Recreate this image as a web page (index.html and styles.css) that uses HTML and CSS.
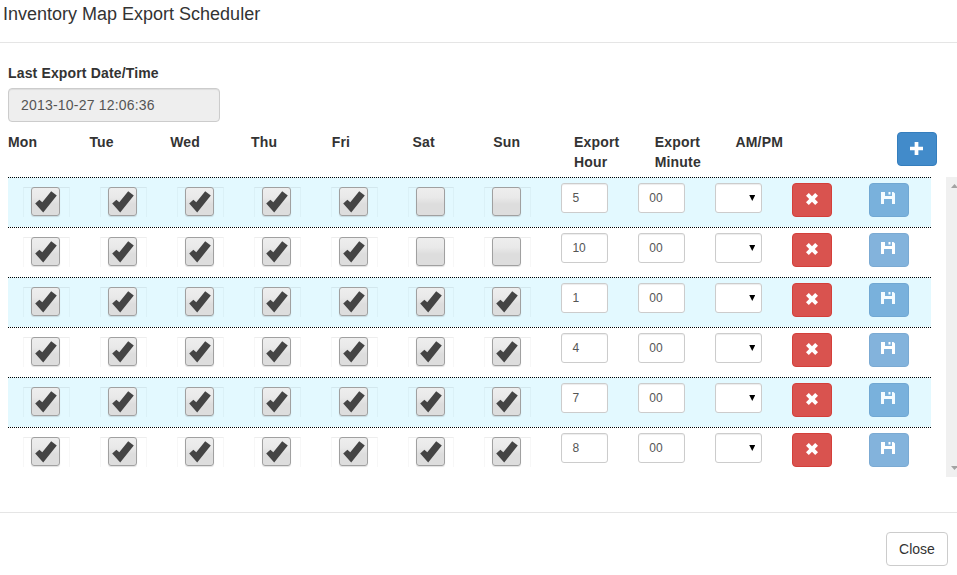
FILE: index.html
```html
<!DOCTYPE html>
<html lang="en">
<head>
<meta charset="utf-8">
<title>Inventory Map Export Scheduler</title>
<link rel="stylesheet" href="styles.css">
</head>
<body>
<svg class="sprites" aria-hidden="true">
  <symbol id="check" viewBox="0 0 22 22"><path d="M.2 12.6 4.4 8.8 7.3 11.2 16.2.2 21.8 4.6 8.2 21.4z"/></symbol>
  <symbol id="plus" viewBox="0 0 14 14"><path d="M5 0h4v5h5v4H9v5H5V9H0V5h5z"/></symbol>
  <symbol id="times" viewBox="0 0 12 12"><path d="M0 2.8 2.8 0 6 3.2 9.2 0 12 2.8 8.8 6 12 9.2 9.2 12 6 8.8 2.8 12 0 9.2 3.2 6z"/></symbol>
  <symbol id="floppy" viewBox="0 0 14 12"><path d="M0 0h4v4h7V0h1.5L14 1.5V12h-3V7H3v5H0zM4 4h7v3H4zM7.5 0h2v2.6h-2z"/></symbol>
</svg>
<header class="title">Inventory Map Export Scheduler</header>
<main class="body">
  <label class="label" for="last">Last Export Date/Time</label>
  <input class="last" id="last" value="2013-10-27 12:06:36" disabled>
  <div class="heads">
    <b>Mon</b><b>Tue</b><b>Wed</b><b>Thu</b><b>Fri</b><b>Sat</b><b>Sun</b>
    <b>Export Hour</b><b>Export Minute</b><b>AM/PM</b><b></b>
    <button class="btn add"><svg><use href="#plus"/></svg></button>
  </div>
  <div class="list">
    <div class="rows" id="rows"></div>
    <div class="scroll"><i class="up"></i><i class="down"></i></div>
  </div>
</main>
<footer class="footer"><button class="close">Close</button></footer>
<script src="rows.js"></script>
</body>
</html>
```
FILE: rows.js
```js
const schedule = [
  { hour: "5", days: 5 },
  { hour: "10", days: 5 },
  { hour: "1", days: 7 },
  { hour: "4", days: 7 },
  { hour: "7", days: 7 },
  { hour: "8", days: 7 }
];

document.getElementById("rows").innerHTML = schedule.map(({ hour, days }) => {
  const boxes = Array.from({ length: 7 }, (_, day) =>
    `<div class="cell"><div class="toggle"><span class="box">${day < days ? '<svg><use href="#check"/></svg>' : ""}</span></div></div>`
  ).join("");
  return `<div class="row">${boxes}
    <div class="cell"><div class="field">${hour}</div></div>
    <div class="cell"><div class="field">00</div></div>
    <div class="cell"><div class="field select"><i></i></div></div>
    <div class="cell"><button class="btn remove"><svg><use href="#times"/></svg></button></div>
    <div class="cell"><button class="btn save"><svg><use href="#floppy"/></svg></button></div>
  </div>`;
}).join("");
```
FILE: styles.css
```css
* { box-sizing: border-box; }
body {
  margin: 0;
  height: 575px;
  overflow: hidden;
  background: #fff;
  color: #333;
  font: 14px/20px "Liberation Sans", Arial, sans-serif;
}
.sprites { display: none; }
.title {
  height: 43px;
  padding: 1px 3px 0;
  border-bottom: 1px solid #e5e5e5;
  font-size: 18px;
  line-height: 26px;
}
.body { height: 469px; padding: 20px 0 0 8px; }
.label { display: block; margin-bottom: 5px; font-weight: bold; letter-spacing: .15px; }
.last {
  display: block;
  width: 212px;
  height: 34px;
  padding: 6px 12px;
  border: 1px solid #ccc;
  border-radius: 4px;
  background: #eee;
  box-shadow: inset 0 1px 1px rgba(0, 0, 0, .075);
  color: #555;
  font: inherit;
  letter-spacing: .2px;
}
.heads {
  display: grid;
  grid-template-columns: 81.4px repeat(11, 80.75px);
  height: 55px;
  padding-top: 10px;
}
.heads b { padding-right: 30px; letter-spacing: .2px; }
.btn {
  display: flex;
  align-items: center;
  justify-content: center;
  width: 40px;
  height: 34px;
  padding: 0;
  border: 1px solid;
  border-radius: 4px;
}
.btn svg { fill: #fff; }
.add { background: #428bca; border-color: #357ebd; }
.add svg { width: 13px; height: 13px; margin-bottom: 1px; }
.remove { background: #d9534f; border-color: #d43f3a; }
.remove svg { width: 12px; height: 12px; margin-bottom: 2px; }
.save { background: #428bca; border-color: #357ebd; opacity: .65; }
.save svg { width: 14px; height: 12px; margin: 0 2px 4px 0; }
.list { display: flex; height: 300px; overflow: hidden; }
.rows { flex: 0 0 923px; }
.row {
  display: grid;
  grid-template-columns: repeat(12, 1fr);
  height: 50px;
  padding-top: 5px;
  border-top: 1px dotted #000;
}
.row:nth-child(odd) { background: #e3f9ff; }
.cell { padding: 0 15px; min-width: 0; }
.toggle {
  display: flex;
  height: 30px;
  margin-top: 4px;
  padding-left: 6.98px;
  border: 1px solid rgba(0, 0, 0, .03);
  border-top-color: rgba(0, 0, 0, .065);
  border-bottom: 0;
}
.box {
  flex: none;
  width: 29px;
  height: 29px;
  margin-top: -1px;
  padding: 3px 0 0 3px;
  border: 1px solid #a0a0a0;
  border-radius: 3px;
  background: linear-gradient(#eee 0, #e9e9e9 35%, #ddd 60%, #ddd);
  box-shadow: 0 1px 1px rgba(0, 0, 0, .12);
}
.box svg { display: block; width: 22px; height: 22px; fill: #444; }
.field {
  width: 47px;
  height: 30px;
  padding: 4px 10px;
  border: 1px solid #ccc;
  border-radius: 3px;
  background: #fff;
  box-shadow: inset 0 1px 1px rgba(0, 0, 0, .075);
  color: #555;
  font-size: 12px;
}
.select { display: flex; justify-content: flex-end; padding: 11px 6px 0 0; }
.select i {
  width: 6px;
  height: 6px;
  background: #000;
  clip-path: polygon(0 0, 100% 0, 50% 100%);
}
.scroll {
  display: flex;
  flex-direction: column;
  justify-content: space-between;
  flex: 0 0 17px;
  margin-left: 15px;
  padding: 7px 5px;
  background: #f0f0f0;
}
.scroll i { width: 7px; height: 4px; background: #a3a3a3; }
.up { clip-path: polygon(50% 0, 100% 100%, 0 100%); }
.down { clip-path: polygon(0 0, 100% 0, 50% 100%); }
.footer {
  display: flex;
  justify-content: flex-end;
  padding: 19px 9px 0 0;
  border-top: 1px solid #e5e5e5;
}
.close {
  width: 62px;
  height: 34px;
  padding: 0;
  border: 1px solid #ccc;
  border-radius: 4px;
  background: #fff;
  color: #333;
  font: inherit;
}
```
